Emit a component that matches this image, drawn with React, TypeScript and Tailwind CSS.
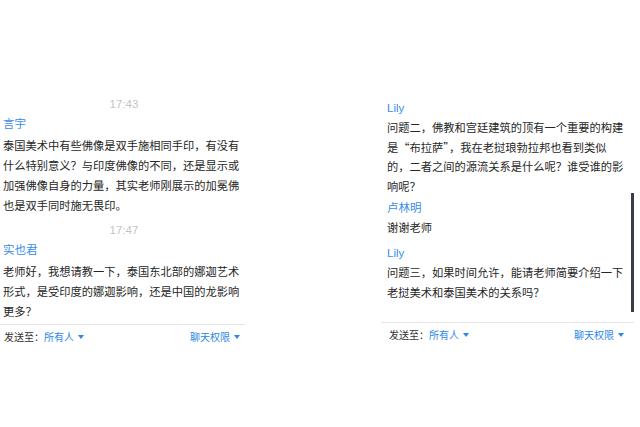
const LATIN = "font-['Liberation_Sans','Noto_Sans_CJK_SC',sans-serif]";
const CJK = "font-['Noto_Sans_CJK_SC','Liberation_Sans',sans-serif]";

type Msg = { name: string; lines: string[] };

const leftTop: Msg = {
  name: '言宇',
  lines: [
    '泰国美术中有些佛像是双手施相同手印，有没有',
    '什么特别意义？与印度佛像的不同，还是显示或',
    '加强佛像自身的力量，其实老师刚展示的加冕佛',
    '也是双手同时施无畏印。',
  ],
};

const leftBottom: Msg = {
  name: '实也君',
  lines: [
    '老师好，我想请教一下，泰国东北部的娜迦艺术',
    '形式，是受印度的娜迦影响，还是中国的龙影响',
    '更多？',
  ],
};

function Caret() {
  return (
    <svg width="6" height="4" viewBox="0 0 6 4" className="ml-[4px] mt-[1px]">
      <path d="M0 0 L6 0 L3 4 Z" fill="#2d87e6" />
    </svg>
  );
}

function Stamp({ time, className }: { time: string; className?: string }) {
  return (
    <div className={`h-[20px] leading-[20px] text-center text-[11.5px] text-[#c4c4c4] ${LATIN} ${className ?? ''}`}>
      {time}
    </div>
  );
}

function Message({ msg, gap, lead, className }: { msg: Msg; gap: string; lead: string; className?: string }) {
  return (
    <div className={className}>
      <div className={`h-[20px] leading-[20px] text-[11.5px] text-[#3a8cec] ${LATIN}`}>{msg.name}</div>
      <div className={`${gap} ${lead} text-[11.25px] text-[#262626] ${CJK}`}>
        {msg.lines.map((l, i) => (
          <div key={i} className="whitespace-nowrap">{l}</div>
        ))}
      </div>
    </div>
  );
}

export default function App() {
  return (
    <div className={`flex w-[640px] h-[427px] bg-white pt-[94px] ${LATIN}`}>
      {/* left chat */}
      <div className="w-[245px] flex flex-col">
        <div className="h-[230px] pl-[3px]">
          <Stamp time="17:43" />
          <Message msg={leftTop} gap="mt-[1px]" lead="leading-[20px]" />
          <Stamp time="17:47" className="mt-[5px]" />
          <Message msg={leftBottom} gap="mt-[1px]" lead="leading-[20px]" />
        </div>
        <div className="h-px bg-[#e6e6e6]" />
        <div className={`flex items-center justify-between h-[22px] pl-[4px] pr-[5px] text-[10px] ${CJK}`}>
          <div className="flex items-center">
            <span className="text-[#333]">发送至：</span>
            <span className="text-[#2d87e6]">所有人</span>
            <Caret />
          </div>
          <div className="flex items-center">
            <span className="text-[#2d87e6]">聊天权限</span>
            <Caret />
          </div>
        </div>
      </div>

      {/* right chat */}
      <div className="ml-[136px] w-[253px] flex flex-col pt-[4px]">
        <div className="relative h-[224px] pl-[6px]">
          <Message
            msg={{
              name: 'Lily',
              lines: [
                '问题二，佛教和宫廷建筑的顶有一个重要的构建',
                '是“布拉萨”，我在老挝琅勃拉邦也看到类似',
                '的，二者之间的源流关系是什么呢？谁受谁的影',
                '响呢？',
              ],
            }}
            gap="mt-0"
            lead="leading-[19.5px]"
          />
          <Message msg={{ name: '卢林明', lines: ['谢谢老师'] }} gap="mt-0" lead="leading-[19.5px]" className="mt-[2px]" />
          <Message
            msg={{
              name: 'Lily',
              lines: ['问题三，如果时间允许，能请老师简要介绍一下', '老挝美术和泰国美术的关系吗？'],
            }}
            gap="mt-0"
            lead="leading-[19.5px]"
            className="mt-[5.5px]"
          />
          <div className="absolute right-0 top-[95px] h-[119px] w-[3px] bg-[#3c3c46]" />
        </div>
        <div className="h-px bg-[#e6e6e6]" />
        <div className={`flex items-center justify-between h-[22px] pl-[8px] pr-[10px] text-[10px] ${CJK}`}>
          <div className="flex items-center">
            <span className="text-[#333]">发送至：</span>
            <span className="text-[#2d87e6]">所有人</span>
            <Caret />
          </div>
          <div className="flex items-center">
            <span className="text-[#2d87e6]">聊天权限</span>
            <Caret />
          </div>
        </div>
      </div>
    </div>
  );
}
